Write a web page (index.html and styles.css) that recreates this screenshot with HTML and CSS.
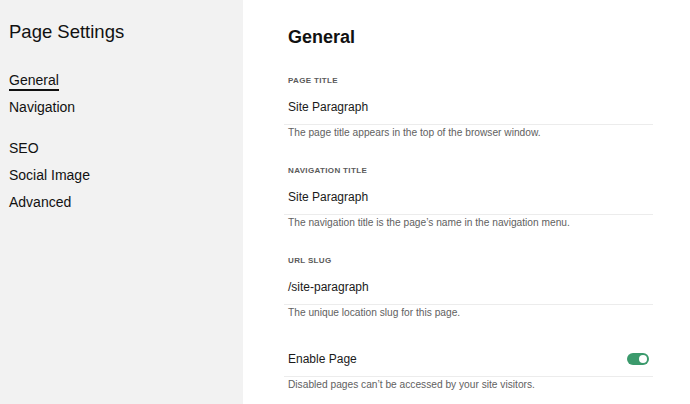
FILE: index.html
```html
<!DOCTYPE html>
<html lang="en">
<head>
<meta charset="utf-8">
<title>Page Settings</title>
<link rel="stylesheet" href="styles.css">
</head>
<body>
<div class="app">
  <aside class="sidebar">
    <h1 class="side-title">Page Settings</h1>
    <nav class="side-nav">
      <div class="nav-group">
        <a class="nav-item"><span class="active">General</span></a>
        <a class="nav-item">Navigation</a>
      </div>
      <div class="nav-group">
        <a class="nav-item">SEO</a>
        <a class="nav-item">Social Image</a>
        <a class="nav-item">Advanced</a>
      </div>
    </nav>
  </aside>
  <main class="main">
    <h2 class="heading">General</h2>
    <section class="field">
      <div class="label">Page Title</div>
      <div class="value">Site Paragraph</div>
      <div class="help">The page title appears in the top of the browser window.</div>
    </section>
    <section class="field">
      <div class="label">Navigation Title</div>
      <div class="value">Site Paragraph</div>
      <div class="help">The navigation title is the page’s name in the navigation menu.</div>
    </section>
    <section class="field">
      <div class="label">URL Slug</div>
      <div class="value">/site-paragraph</div>
      <div class="help">The unique location slug for this page.</div>
    </section>
    <section class="field field-toggle">
      <div class="value value-row">
        <span>Enable Page</span>
        <span class="toggle"><span class="knob"></span></span>
      </div>
      <div class="help">Disabled pages can’t be accessed by your site visitors.</div>
    </section>
  </main>
</div>
</body>
</html>
```
FILE: styles.css
```css
* { box-sizing: border-box; }
html, body {
  margin: 0;
  padding: 0;
  height: 100%;
}
body {
  font-family: "Liberation Sans", Arial, sans-serif;
  color: #1a1a1a;
  background: #ffffff;
}
.app {
  display: flex;
  height: 404px;
  overflow: hidden;
}
.sidebar {
  width: 243px;
  flex: 0 0 243px;
  background: #f2f2f2;
  padding: 21px 9px 0;
}
.side-title {
  margin: 0;
  font-size: 18.5px;
  line-height: 22px;
  font-weight: 400;
  color: #111;
}
.side-nav {
  margin-top: 24px;
  display: flex;
  flex-direction: column;
  gap: 14px;
}
.nav-group {
  display: flex;
  flex-direction: column;
}
.nav-item {
  display: block;
  font-size: 14px;
  line-height: 27px;
  color: #111;
}
.active {
  border-bottom: 2px solid #111;
  padding-bottom: 1px;
}
.main {
  flex: 1;
  padding: 25px 37px 0 41px;
}
.heading {
  margin: 0 0 26px;
  padding-left: 4px;
  font-size: 18px;
  line-height: 24px;
  font-weight: 700;
  color: #111;
}
.field {
  margin-bottom: 25px;
}
.field-toggle {
  margin-top: 29px;
}
.label {
  padding-left: 4px;
  font-size: 8px;
  line-height: 12px;
  font-weight: 700;
  letter-spacing: 0.35px;
  text-transform: uppercase;
  color: #5a5a5a;
}
.value {
  margin-top: 10px;
  padding: 0 4px 7px;
  font-size: 12px;
  line-height: 20px;
  color: #1a1a1a;
  border-bottom: 1px solid #ececec;
}
.field-toggle .value {
  margin-top: 0;
}
.value-row {
  display: flex;
  align-items: center;
  justify-content: space-between;
}
.toggle {
  width: 22px;
  height: 12px;
  border-radius: 6px;
  background: #3b9a6c;
  display: flex;
  align-items: center;
  justify-content: flex-end;
  padding-right: 2px;
}
.knob {
  width: 8px;
  height: 8px;
  border-radius: 50%;
  background: #fff;
}
.help {
  margin-top: 1px;
  padding-left: 4px;
  font-size: 10.2px;
  line-height: 14px;
  color: #616161;
}
```
